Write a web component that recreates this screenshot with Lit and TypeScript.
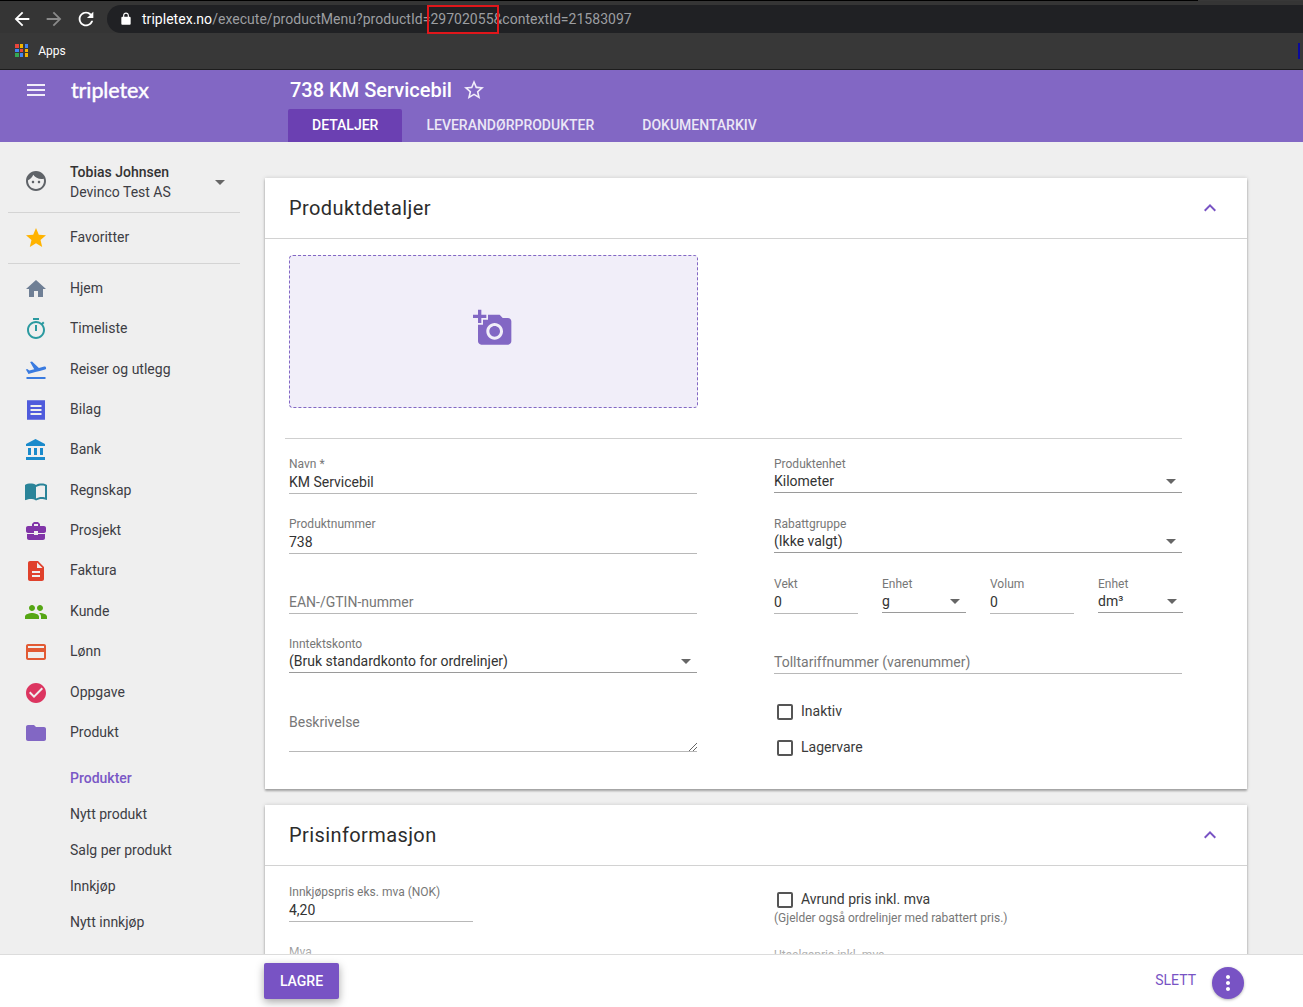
import { html, css, LitElement, nothing } from "lit";
import { customElement } from "lit/decorators.js";

// little teeth along the top and bottom edge of the receipt icon
const RECEIPT_TEETH = Array.from({ length: 9 }, (_, i) => {
  const x = 3.5 + i * 2;
  return `M${x} 2h1v.5h-1zM${x} 21.5h1v.5h-1z`;
}).join("");

const ICONS = {
  menu: "M3 18h18v-2H3v2zm0-5h18v-2H3v2zm0-7v2h18V6H3z",
  back: "M20 11H7.83l5.59-5.59L12 4l-8 8 8 8 1.41-1.41L7.83 13H20v-2z",
  forward: "M12 4l-1.41 1.41L16.17 11H4v2h12.17l-5.58 5.59L12 20l8-8z",
  refresh:
    "M17.65 6.35C16.2 4.9 14.21 4 12 4c-4.42 0-7.99 3.58-7.99 8s3.57 8 7.99 8c3.73 0 6.84-2.55 7.73-6h-2.08c-.82 2.33-3.04 4-5.65 4-3.31 0-6-2.69-6-6s2.69-6 6-6c1.66 0 3.14.69 4.22 1.78L13 11h7V4l-2.35 2.35z",
  lock: "M18 8h-1V6c0-2.76-2.24-5-5-5S7 3.24 7 6v2H6c-1.1 0-2 .9-2 2v10c0 1.1.9 2 2 2h12c1.1 0 2-.9 2-2V10c0-1.1-.9-2-2-2zm-6-5c1.66 0 3 1.34 3 3v2H9V6c0-1.66 1.34-3 3-3z",
  star: "M12 17.27L18.18 21l-1.64-7.03L22 9.24l-7.19-.61L12 2 9.19 8.63 2 9.24l5.46 4.73L5.82 21z",
  starBorder:
    "M22 9.24l-7.19-.62L12 2 9.19 8.63 2 9.24l5.46 4.73L5.82 21 12 17.27 18.18 21l-1.63-7.03L22 9.24zM12 15.4l-3.76 2.27 1-4.28-3.32-2.88 4.38-.38L12 6.1l1.71 4.04 4.38.38-3.32 2.88 1 4.28L12 15.4z",
  face: "M9 11.75c-.69 0-1.25.56-1.25 1.25s.56 1.25 1.25 1.25 1.25-.56 1.25-1.25-.56-1.25-1.25-1.25zm6 0c-.69 0-1.25.56-1.25 1.25s.56 1.25 1.25 1.25 1.25-.56 1.25-1.25-.56-1.25-1.25-1.25zM12 2C6.48 2 2 6.48 2 12s4.48 10 10 10 10-4.48 10-10S17.52 2 12 2zm0 18c-4.41 0-8-3.59-8-8 0-.29.02-.58.05-.86 2.36-1.05 4.23-2.98 5.21-5.37C11.07 8.33 14.05 10 17.42 10c.78 0 1.53-.09 2.25-.26.21.71.33 1.47.33 2.26 0 4.41-3.59 8-8 8z",
  home: "M10 20v-6h4v6h5v-8h3L12 3 2 12h3v8z",
  timer:
    "M15 1H9v2h6V1zm-4 13h2V8h-2v6zm8.03-6.61l1.42-1.42c-.43-.51-.9-.99-1.41-1.41l-1.42 1.42C16.07 4.74 14.12 4 12 4c-4.97 0-9 4.03-9 9s4.02 9 9 9 9-4.03 9-9c0-2.12-.74-4.07-1.97-5.61zM12 20c-3.87 0-7-3.13-7-7s3.13-7 7-7 7 3.13 7 7-3.13 7-7 7z",
  flight:
    "M2.5 19h19v2h-19zm19.57-9.36c-.21-.8-1.04-1.28-1.84-1.06L14.92 10l-6.9-6.43-1.93.51 4.14 7.17-4.97 1.33-1.97-1.54-1.45.39 1.82 3.16.77 1.33 1.6-.43 5.31-1.42 4.35-1.16L21 11.49c.81-.23 1.28-1.05 1.07-1.85z",
  receipt: `M3 2.5h18v19H3zM6.5 7v2h11V7zM6.5 11v2h11v-2zM6.5 15v2h11v-2z${RECEIPT_TEETH}`,
  bank: "M4 10v7h3v-7H4zm6 0v7h3v-7h-3zM2 22h19v-3H2v3zm14-12v7h3v-7h-3zm-4.5-9L2 6v2h19V6l-9.5-5z",
  book: "M21 5c-1.11-.35-2.33-.5-3.5-.5-1.95 0-4.05.4-5.5 1.5-1.45-1.1-3.55-1.5-5.5-1.5S2.45 4.9 1 6v14.65c0 .25.25.5.5.5.1 0 .15-.05.25-.05C3.1 20.45 5.05 20 6.5 20c1.95 0 4.05.4 5.5 1.5 1.35-.85 3.8-1.5 5.5-1.5 1.65 0 3.35.3 4.75 1.05.1.05.15.05.25.05.25 0 .5-.25.5-.5V6c-.6-.45-1.25-.75-2-1zm0 13.5c-1.1-.35-2.3-.5-3.5-.5-1.7 0-4.15.65-5.5 1.5V8c1.35-.85 3.8-1.5 5.5-1.5 1.2 0 2.4.15 3.5.5v11.5z",
  briefcase:
    "M10 16v-1H3.01L3 19c0 1.11.89 2 2 2h14c1.11 0 2-.89 2-2v-4h-7v1h-4zm10-9h-4.01V5l-2-2h-4l-2 2v2H4c-1.1 0-2 .9-2 2v3c0 1.11.89 2 2 2h6v-2h4v2h6c1.1 0 2-.9 2-2V9c0-1.1-.9-2-2-2zm-6 0h-4V5h4v2z",
  invoice:
    "M14 2H6c-1.1 0-1.99.9-1.99 2L4 20c0 1.1.89 2 1.99 2H18c1.1 0 2-.9 2-2V8l-6-6zm2 16H8v-2h8v2zm0-4H8v-2h8v2zm-3-5V3.5L18.5 9H13z",
  people:
    "M16 11c1.66 0 2.99-1.34 2.99-3S17.66 5 16 5c-1.66 0-3 1.34-3 3s1.34 3 3 3zm-8 0c1.66 0 2.99-1.34 2.99-3S9.66 5 8 5C6.34 5 5 6.34 5 8s1.34 3 3 3zm0 2c-2.33 0-7 1.17-7 3.5V19h14v-2.5c0-2.33-4.67-3.5-7-3.5zm8 0c-.29 0-.62.02-.97.05 1.16.84 1.97 1.97 1.97 3.45V19h6v-2.5c0-2.33-4.67-3.5-7-3.5z",
  card: "M20 4H4c-1.11 0-1.99.89-1.99 2L2 18c0 1.11.89 2 2 2h16c1.11 0 2-.89 2-2V6c0-1.11-.89-2-2-2zm0 14H4v-6h16v6zm0-10H4V6h16v2z",
  check:
    "M12 2C6.48 2 2 6.48 2 12s4.48 10 10 10 10-4.48 10-10S17.52 2 12 2zm-2 15l-5-5 1.41-1.41L10 14.17l7.59-7.59L19 8l-9 9z",
  folder:
    "M10 4H4c-1.1 0-1.99.9-1.99 2L2 18c0 1.1.9 2 2 2h16c1.1 0 2-.9 2-2V8c0-1.1-.9-2-2-2h-8l-2-2z",
  addPhoto:
    "M3 4V1h2v3h3v2H5v3H3V6H0V4h3zm3 6V7h3V4h7l1.83 2H21c1.1 0 2 .9 2 2v12c0 1.1-.9 2-2 2H5c-1.1 0-2-.9-2-2V10h3zm7 9c2.76 0 5-2.24 5-5s-2.24-5-5-5-5 2.24-5 5 2.24 5 5 5zm-3.2-5c0 1.77 1.43 3.2 3.2 3.2s3.2-1.43 3.2-3.2-1.43-3.2-3.2-3.2-3.2 1.43-3.2 3.2z",
  less: "M12 8l-6 6 1.41 1.41L12 10.83l4.59 4.58L18 14z",
  more: "M12 8c1.1 0 2-.9 2-2s-.9-2-2-2-2 .9-2 2 .9 2 2 2zm0 2c-1.1 0-2 .9-2 2s.9 2 2 2 2-.9 2-2-.9-2-2-2zm0 6c-1.1 0-2 .9-2 2s.9 2 2 2 2-.9 2-2-.9-2-2-2z",
};

const NAV = [
  { label: "Hjem", icon: ICONS.home, color: "#6f7f95" },
  { label: "Timeliste", icon: ICONS.timer, color: "#2b9aa0" },
  { label: "Reiser og utlegg", icon: ICONS.flight, color: "#3a7be0" },
  { label: "Bilag", icon: ICONS.receipt, color: "#4f5bdc" },
  { label: "Bank", icon: ICONS.bank, color: "#1a8acb" },
  { label: "Regnskap", icon: ICONS.book, color: "#2a8499" },
  { label: "Prosjekt", icon: ICONS.briefcase, color: "#8135a8" },
  { label: "Faktura", icon: ICONS.invoice, color: "#e0412c" },
  { label: "Kunde", icon: ICONS.people, color: "#55a614" },
  { label: "Lønn", icon: ICONS.card, color: "#e25a34" },
  { label: "Oppgave", icon: ICONS.check, color: "#dc3560" },
  { label: "Produkt", icon: ICONS.folder, color: "#8267c4" },
];

const SUB_NAV = ["Produkter", "Nytt produkt", "Salg per produkt", "Innkjøp", "Nytt innkjøp"];
const APP_DOTS = ["#e8453c", "#f4b400", "#4285f4", "#4285f4", "#e8453c", "#f4b400", "#34a853", "#4285f4", "#f4b400"];

const icon = (d: string, color: string, size = 24) => html`
  <svg class="icon" width=${size} height=${size} viewBox="0 0 24 24" fill=${color}>
    <path fill-rule="evenodd" d=${d}></path>
  </svg>
`;

const field = (label: string, value: string, extra = "") => html`
  <div class="field ${extra}">
    <span class="label">${label}</span>
    <span class="value">${value}</span>
  </div>
`;

const select = (label: string, value: string, extra = "") => html`
  <div class="field select ${extra}">
    ${label ? html`<span class="label">${label}</span>` : nothing}
    <span class="value">${value}</span>
    <i class="caret"></i>
  </div>
`;

const placeholder = (text: string) => html`
  <div class="field empty"><span class="hint">${text}</span></div>
`;

const checkbox = (label: string) => html`
  <label class="check"><i class="box"></i><span>${label}</span></label>
`;

@customElement("app-root")
export class AppRoot extends LitElement {
  static styles = css`
    :host {
      display: grid;
      grid-template-rows: 70px 72px 1fr;
      position: relative;
      height: 1007px;
      overflow: hidden;
      background: #efefef;
      color: #3d3d44;
      font-family: Roboto, "Liberation Sans", sans-serif;
      font-size: 14px;
    }

    .icon {
      display: block;
      flex: none;
    }

    /* browser chrome */
    .chrome {
      display: flex;
      flex-direction: column;
      position: relative;
      background: #383838;
      border-bottom: 1px solid #1d1d1d;
    }

    .chrome::before {
      content: "";
      height: 1px;
      width: 1198px;
      background: #000;
    }

    .toolbar {
      display: flex;
      height: 32px;
      background: #353535;
    }

    .nav-buttons {
      display: flex;
      gap: 10px;
      padding: 3px 0 0 11px;
      width: 107px;
      box-sizing: border-box;
      align-items: center;
    }

    .address {
      display: flex;
      align-items: center;
      flex: 1;
      height: 28px;
      margin-top: 4px;
      border-radius: 14px 0 0 14px;
      background: #202124;
      font-size: 14px;
      letter-spacing: 0.03px;
      color: #9c9ea1;
      white-space: nowrap;
    }

    .address svg {
      margin: 0 9px 0 12px;
    }

    .address b {
      font-weight: 400;
      color: #fff;
    }

    .url-mark {
      position: absolute;
      left: 427px;
      top: 5px;
      width: 72px;
      height: 29px;
      box-sizing: border-box;
      border: 2px solid #e0161b;
    }

    .bookmarks {
      display: flex;
      align-items: center;
      flex: 1;
      padding: 0 0 1px 15px;
      font-size: 12px;
      color: #fff;
    }

    .apps {
      display: grid;
      grid-template-columns: repeat(3, 3.6px);
      gap: 1.2px;
      margin-right: 10px;
    }

    .apps i {
      height: 3.6px;
    }

    .edge-mark {
      position: absolute;
      right: 3px;
      top: 43px;
      width: 2px;
      height: 16px;
      background: #0a0a9c;
    }

    /* purple app bar */
    .appbar {
      display: grid;
      grid-template-columns: 288px 1fr;
      background: #8267c4;
      color: #fff;
    }

    .brand {
      display: flex;
      align-items: center;
      gap: 23px;
      height: 40px;
      padding-left: 24px;
    }

    .logo {
      font-family: Lato, sans-serif;
      font-size: 21.5px;
      font-weight: 400;
      letter-spacing: -0.1px;
      -webkit-text-stroke: 0.4px #fff;
      margin-top: -1px;
    }

    .title {
      display: flex;
      align-items: center;
      gap: 10px;
      height: 40px;
      padding-left: 2px;
      font-size: 20px;
      font-weight: 500;
    }

    .tabs {
      display: flex;
      height: 33px;
      margin-top: -1px;
    }

    .tab {
      display: flex;
      align-items: center;
      padding: 0 24px 2px;
      font-weight: 500;
      color: #ebe6f6;
      border-radius: 2px 2px 0 0;
    }

    .tab.active {
      background: #6b40b2;
      color: #fff;
    }

    /* body */
    .body {
      display: grid;
      grid-template-columns: 265px 982px;
      min-height: 0;
      overflow: hidden;
    }

    .side {
      display: flex;
      flex-direction: column;
      padding-top: 20px;
    }

    .user {
      display: flex;
      align-items: center;
      gap: 22px;
      height: 50px;
      margin: 0 25px 0 8px;
      padding: 0 0 0 16px;
      border-bottom: 1px solid #d4d4d4;
    }

    .user .icon {
      margin-top: -12px;
    }

    .user-text {
      flex: 1;
      line-height: 20px;
      margin-top: -11px;
    }

    .user-name {
      font-weight: 500;
      color: #333;
    }

    .user .caret {
      margin: -9px 15px 0 0;
      position: static;
    }

    .fav {
      display: flex;
      align-items: center;
      gap: 22px;
      height: 50px;
      margin: 0 25px 0 8px;
      padding-left: 16px;
      border-bottom: 1px solid #d4d4d4;
    }

    .fav span {
      margin-top: -2px;
    }

    .nav {
      display: flex;
      flex-direction: column;
      padding-top: 3.8px;
    }

    .nav-item {
      display: flex;
      align-items: center;
      gap: 22px;
      height: 40.36px;
      padding-left: 24px;
    }

    .nav-item .icon {
      margin-top: 2px;
    }

    .sub {
      display: flex;
      flex-direction: column;
      padding: 7.5px 0 0 70px;
    }

    .sub a {
      height: 36px;
      line-height: 36px;
    }

    .sub a.active {
      color: #7a58c6;
      font-weight: 500;
    }

    /* cards */
    .main {
      display: flex;
      flex-direction: column;
      gap: 16px;
      padding-top: 36px;
    }

    .panel {
      flex: none;
      background: #fff;
      box-shadow: 0 2px 2px rgba(0, 0, 0, 0.28), 0 0 4px rgba(0, 0, 0, 0.16);
    }

    .panel-head {
      display: flex;
      align-items: center;
      justify-content: space-between;
      height: 60px;
      padding: 0 25px 0 24px;
      border-bottom: 1px solid #d2d2d2;
      font-size: 20px;
      letter-spacing: 0.4px;
      color: #2c2c2c;
    }

    .details {
      padding: 16px 65px 0 24px;
      height: 550px;
      box-sizing: border-box;
    }

    .dropzone {
      display: flex;
      align-items: center;
      justify-content: center;
      width: 409px;
      height: 153px;
      box-sizing: border-box;
      padding: 0 1px 8px 0;
      background: #f1eef9;
      border: 1px dashed #8267c4;
      border-radius: 4px;
    }

    .rule {
      height: 1px;
      margin: 30px 0 19px -4px;
      background: #cfcfcf;
    }

    .form {
      display: grid;
      grid-template-columns: 408px 408px;
      column-gap: 77px;
    }

    .col {
      display: flex;
      flex-direction: column;
      gap: 24px;
    }

    .field {
      position: relative;
      display: flex;
      flex-direction: column;
      height: 36px;
      box-sizing: border-box;
      border-bottom: 1px solid #b8b8b8;
    }

    .field.select {
      height: 35px;
      margin-bottom: 1px;
      border-bottom-color: #9a9a9a;
    }

    .label {
      margin-top: -1px;
      font-size: 12px;
      line-height: 14px;
      color: #777;
    }

    .value {
      font-size: 14px;
      line-height: 19px;
      padding-top: 2px;
      color: #333;
    }

    .select .value {
      padding-top: 1px;
    }

    .hint {
      margin-top: auto;
      font-size: 14px;
      line-height: 22px;
      color: #777;
    }

    .caret {
      position: absolute;
      right: 6px;
      bottom: 8px;
      width: 0;
      height: 0;
      border: 5px solid transparent;
      border-top-color: #666;
      border-bottom-width: 0;
    }

    .textarea {
      position: relative;
      display: flex;
      align-items: flex-start;
      height: 54px;
      box-sizing: border-box;
      padding-top: 14px;
      border-bottom: 1px solid #b8b8b8;
      line-height: 20px;
      color: #777;
    }

    .textarea svg {
      position: absolute;
      right: 0;
      bottom: 0;
    }

    .quad {
      display: grid;
      grid-template-columns: repeat(3, 84px) 85px;
      column-gap: 24px;
    }

    .stack {
      display: flex;
      flex-direction: column;
      gap: 16px;
      margin-top: 3px;
      padding-left: 3px;
    }

    .check {
      display: flex;
      align-items: center;
      gap: 8px;
      height: 20px;
      color: #3a3a3a;
    }

    .box {
      width: 16px;
      height: 16px;
      box-sizing: border-box;
      margin-top: 2px;
      border: 2px solid #555;
      border-radius: 2px;
    }

    .price {
      padding: 20px 65px 0 24px;
      height: 300px;
      box-sizing: border-box;
    }

    .price .field.short {
      width: 184px;
    }

    .round-block {
      height: 39px;
    }

    .price .check {
      margin-top: 3px;
      padding-left: 3px;
    }

    .helper {
      margin-top: 1px;
      font-size: 12px;
      line-height: 16px;
      color: #777;
    }

    /* action bar lies over the scrolling cards */
    .actions {
      position: absolute;
      left: 0;
      right: 0;
      bottom: 0;
      display: flex;
      align-items: center;
      height: 53px;
      box-sizing: border-box;
      background: #fff;
      border-top: 1px solid #dcdcdc;
    }

    .actions::before {
      content: "";
      position: absolute;
      left: 265px;
      width: 982px;
      top: -17px;
      height: 16px;
      background: linear-gradient(rgba(255, 255, 255, 0), rgba(255, 255, 255, 0.45));
    }

    .save {
      display: flex;
      align-items: center;
      justify-content: center;
      width: 75px;
      height: 36px;
      margin-left: 264px;
      background: #7853c4;
      color: #fff;
      font-weight: 500;
      border-radius: 2px;
      box-shadow: 0 3px 8px rgba(0, 0, 0, 0.35);
    }

    .delete {
      margin: 0 16px 2px auto;
      color: #7853c4;
    }

    .fab {
      display: flex;
      align-items: center;
      justify-content: center;
      width: 32px;
      height: 32px;
      margin: 3px 59px 0 0;
      border-radius: 50%;
      background: #7853c4;
      box-shadow: 0 1px 3px rgba(0, 0, 0, 0.3);
    }
  `;

  render() {
    return html`
      ${this.renderChrome()} ${this.renderAppbar()}
      <div class="body">
        ${this.renderSide()}
        <main class="main">${this.renderDetails()} ${this.renderPrice()}</main>
      </div>
      <div class="actions">
        <div class="save">LAGRE</div>
        <div class="delete">SLETT</div>
        <div class="fab">${icon(ICONS.more, "#fff", 24)}</div>
      </div>
    `;
  }

  private renderChrome() {
    return html`
      <div class="chrome">
        <div class="toolbar">
          <div class="nav-buttons">
            ${icon(ICONS.back, "#fff", 22)} ${icon(ICONS.forward, "#8a8a8a", 22)} ${icon(ICONS.refresh, "#fff", 22)}
          </div>
          <div class="address">
            ${icon(ICONS.lock, "#fff", 14)}
            <span><b>tripletex.no</b>/execute/productMenu?productId=29702055&contextId=21583097</span>
          </div>
        </div>
        <div class="bookmarks">
          <div class="apps">${APP_DOTS.map((c) => html`<i style="background:${c}"></i>`)}</div>
          Apps
        </div>
        <div class="url-mark"></div>
        <div class="edge-mark"></div>
      </div>
    `;
  }

  private renderAppbar() {
    return html`
      <header class="appbar">
        <div class="brand">${icon(ICONS.menu, "#f1edfa", 24)}<span class="logo">tripletex</span></div>
        <div>
          <div class="title">738 KM Servicebil ${icon(ICONS.starBorder, "#f1edfa", 24)}</div>
          <div class="tabs">
            <div class="tab active">DETALJER</div>
            <div class="tab">LEVERANDØRPRODUKTER</div>
            <div class="tab">DOKUMENTARKIV</div>
          </div>
        </div>
      </header>
    `;
  }

  private renderSide() {
    return html`
      <nav class="side">
        <div class="user">
          ${icon(ICONS.face, "#5f6368", 24)}
          <div class="user-text">
            <div class="user-name">Tobias Johnsen</div>
            <div>Devinco Test AS</div>
          </div>
          <i class="caret"></i>
        </div>
        <div class="fav">${icon(ICONS.star, "#ffb300", 24)}<span>Favoritter</span></div>
        <div class="nav">
          ${NAV.map(
            (item) => html`<div class="nav-item">${icon(item.icon, item.color, 24)}<span>${item.label}</span></div>`,
          )}
        </div>
        <div class="sub">
          ${SUB_NAV.map((label, i) => html`<a class=${i === 0 ? "active" : ""}>${label}</a>`)}
        </div>
      </nav>
    `;
  }

  private renderDetails() {
    return html`
      <section class="panel">
        <div class="panel-head">Produktdetaljer ${icon(ICONS.less, "#7853c4", 24)}</div>
        <div class="details">
          <div class="dropzone">${icon(ICONS.addPhoto, "#8267c4", 40)}</div>
          <div class="rule"></div>
          <div class="form">
            <div class="col">
              ${field("Navn *", "KM Servicebil")} ${field("Produktnummer", "738")} ${placeholder("EAN-/GTIN-nummer")}
              ${select("Inntektskonto", "(Bruk standardkonto for ordrelinjer)")}
              <div class="textarea">
                Beskrivelse
                <svg width="9" height="9" viewBox="0 0 9 9" stroke="#666" fill="none">
                  <path d="M1 9L9 1M5 9L9 5"></path>
                </svg>
              </div>
            </div>
            <div class="col">
              ${select("Produktenhet", "Kilometer")} ${select("Rabattgruppe", "(Ikke valgt)")}
              <div class="quad">
                ${field("Vekt", "0")} ${select("Enhet", "g")} ${field("Volum", "0")} ${select("Enhet", "dm³")}
              </div>
              ${placeholder("Tolltariffnummer (varenummer)")}
              <div class="stack">${checkbox("Inaktiv")} ${checkbox("Lagervare")}</div>
            </div>
          </div>
        </div>
      </section>
    `;
  }

  private renderPrice() {
    return html`
      <section class="panel">
        <div class="panel-head">Prisinformasjon ${icon(ICONS.less, "#7853c4", 24)}</div>
        <div class="price">
          <div class="form">
            <div class="col">
              ${field("Innkjøpspris eks. mva (NOK)", "4,20", "short")} ${field("Mva", "")}
            </div>
            <div class="col">
              <div class="round-block">
                ${checkbox("Avrund pris inkl. mva")}
                <div class="helper">(Gjelder også ordrelinjer med rabattert pris.)</div>
              </div>
              ${field("Utsalgspris inkl. mva", "")}
            </div>
          </div>
        </div>
      </section>
    `;
  }
}
